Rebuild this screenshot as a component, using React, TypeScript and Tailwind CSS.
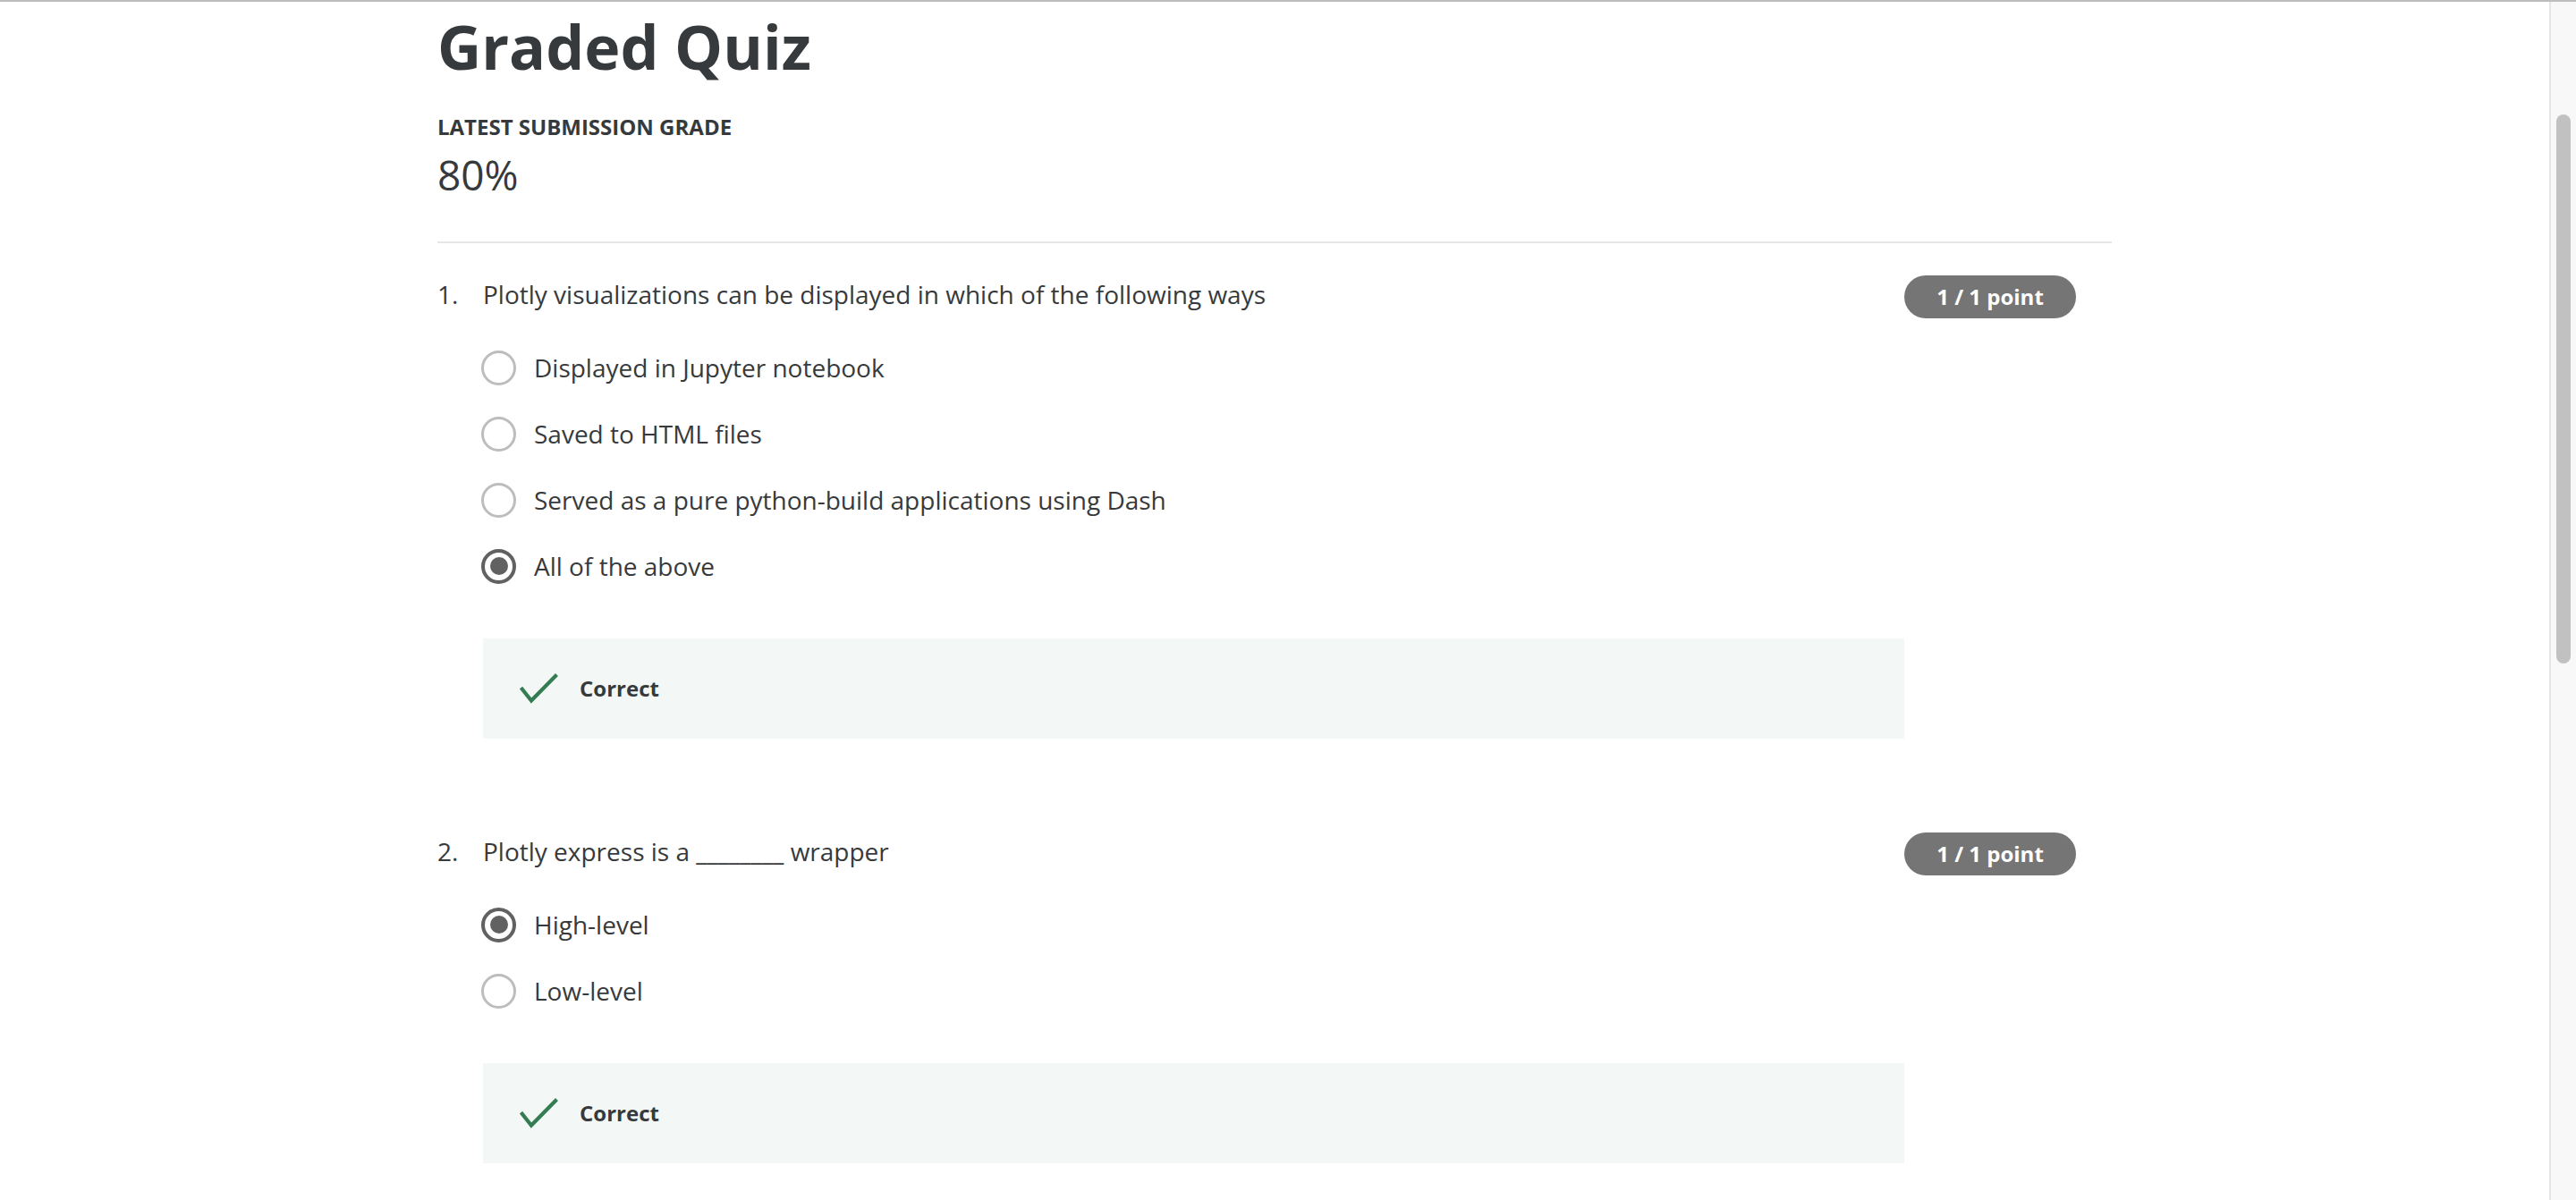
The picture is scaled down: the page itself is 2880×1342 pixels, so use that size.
import React from "react";

const font = { fontFamily: '"Open Sans", "Noto Sans", sans-serif' };

function Radio({ checked }: { checked?: boolean }) {
  if (checked) {
    return (
      <div className="flex h-[39px] w-[39px] shrink-0 items-center justify-center rounded-full border-[4px] border-[#616161]">
        <div className="h-[20px] w-[20px] rounded-full bg-[#616161]" />
      </div>
    );
  }
  return <div className="h-[39px] w-[39px] shrink-0 rounded-full border-[3.5px] border-[#bdbdbd]" />;
}

function Check() {
  return (
    <svg width="44" height="34" viewBox="0 0 44 34" className="shrink-0">
      <polyline points="1.5,16 13,30.5 41.5,1.5" fill="none" stroke="#347d52" strokeWidth="4.2" />
    </svg>
  );
}

function Question({
  num,
  text,
  options,
  selected,
}: {
  num: string;
  text: string;
  options: string[];
  selected: number;
}) {
  return (
    <div className="flex">
      <div className="w-[51px] shrink-0 text-[28px] leading-[48px] text-[#373a3c]">{num}</div>
      <div className="w-[1589px] shrink-0">
        <div className="text-[28px] leading-[48px] text-[#373a3c]">{text}</div>
        <div className="mt-[21px] flex flex-col">
          {options.map((o, i) => (
            <div key={i} className="-ml-[2px] flex h-[74px] items-center gap-[20px]">
              <Radio checked={i === selected} />
              <span className="text-[28px] leading-[40px] text-[#373a3c]">{o}</span>
            </div>
          ))}
        </div>
        <div className="mt-[44px] flex h-[112px] items-center bg-[#f3f8f6] pl-[41px]">
          <Check />
          <span className="ml-[23px] text-[24px] font-bold leading-[30px] text-[#373a3c]">Correct</span>
        </div>
      </div>
      <div className="mt-[3px] flex h-[48px] w-[192px] shrink-0 items-center justify-center rounded-full bg-[#757575] text-[24px] font-bold text-white">
        1 / 1 point
      </div>
    </div>
  );
}

export default function App() {
  return (
    <div className="h-[1342px] w-[2880px] overflow-hidden bg-white" style={font}>
      <div className="h-[2px] w-full bg-[#bdbdbd]" />
      <div className="flex h-[1340px]">
        <div className="flex-1">
          <div className="mx-auto w-[1872px] pt-[16px]">
            <h1 className="text-[68px] font-bold leading-[68px] text-[#373a3c]">Graded Quiz</h1>
            <div className="mt-[44px] text-[24px] font-bold leading-[24px] text-[#373a3c]">LATEST SUBMISSION GRADE</div>
            <div className="mt-[18px] text-[46px] leading-[46px] text-[#373a3c]">80%</div>
            <div className="mt-[52px] h-[2px] w-full bg-[#e6e6e6]" />
            <div className="mt-[33px]">
              <Question
                num="1."
                text="Plotly visualizations can be displayed in which of the following ways"
                options={[
                  "Displayed in Jupyter notebook",
                  "Saved to HTML files",
                  "Served as a pure python-build applications using Dash",
                  "All of the above",
                ]}
                selected={3}
              />
            </div>
            <div className="mt-[102px]">
              <Question
                num="2."
                text="Plotly express is a ________ wrapper"
                options={["High-level", "Low-level"]}
                selected={0}
              />
            </div>
          </div>
        </div>
        <div className="flex w-[30px] shrink-0 justify-center border-l-[2px] border-[#e5e5e5] bg-[#f8f8f8] pl-[4px] pr-[4px]">
          <div className="mt-[126px] h-[614px] w-[16px] rounded-full bg-[#c1c1c1]" />
        </div>
      </div>
    </div>
  );
}
